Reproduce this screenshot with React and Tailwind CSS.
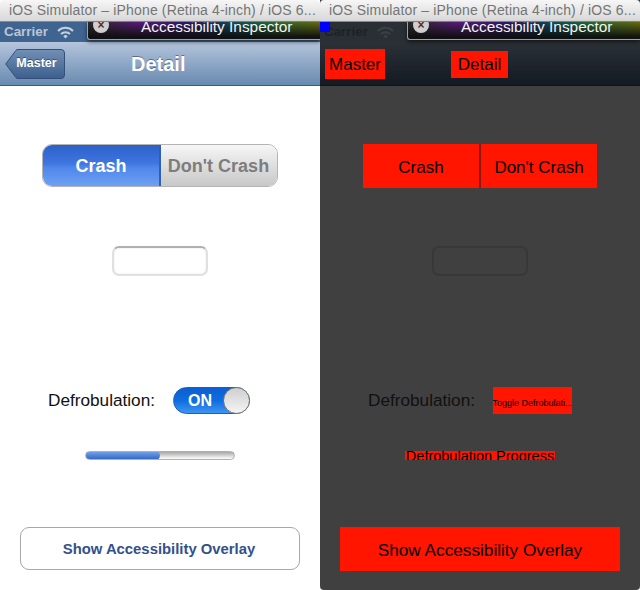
import React from 'react';

const sans = 'font-["Liberation_Sans",Arial,sans-serif]';

const TitleBar = () => (
  <div className="h-[22px] shrink-0 rounded-t-[4px] bg-gradient-to-b from-[#f6f6f6] to-[#d8d8d8] border-b border-[#8a8a8a] pl-[9px] text-[14px] leading-[21px] text-[#757575] tracking-[0.15px] whitespace-nowrap overflow-hidden">
    iOS Simulator – iPhone (Retina 4-inch) / iOS 6...
  </div>
);

const Wifi = ({ color }) => (
  <svg width="17" height="13" viewBox="0 0 17 13" fill="none" stroke={color} strokeWidth="2">
    <path d="M1 5 A10.5 10.5 0 0 1 16 5" />
    <path d="M4 8 A6.5 6.5 0 0 1 13 8" />
    <path d="M8.5 12.5 L6.3 10.3 A3 3 0 0 1 10.7 10.3 Z" fill={color} stroke="none" />
  </svg>
);

const BackShape = () => (
  <svg className="absolute inset-0" width="60" height="30" viewBox="0 0 60 30">
    <defs>
      <linearGradient id="back" x1="0" y1="0" x2="0" y2="1">
        <stop offset="0" stopColor="#7290b4" />
        <stop offset="1" stopColor="#3c5f8e" />
      </linearGradient>
    </defs>
    <path
      d="M0.7 15 L11 1.3 Q11.6 0.5 13 0.5 H56 Q59.5 0.5 59.5 4 V26 Q59.5 29.5 56 29.5 H13 Q11.6 29.5 11 28.7 Z"
      fill="url(#back)"
      stroke="#34507a"
    />
  </svg>
);

const Inspector = () => (
  <div className="absolute left-[87px] right-0 top-[22px] h-[18px] overflow-hidden rounded-bl-[3px] border-l border-b border-[#a0a0a0] bg-[linear-gradient(to_bottom,rgba(0,0,0,0)_0%,rgba(15,15,15,0.95)_85%),linear-gradient(to_right,#2a2a2a_0%,#5a1a78_22%,#2a1a60_45%,#104a5a_62%,#2a6a30_80%,#6a6a10_100%)] shadow-[0_2px_4px_rgba(0,0,0,0.55)]">
    <div className="absolute left-[5px] -top-[5px] flex h-[16px] w-[16px] items-center justify-center rounded-full bg-[#cfcfcf] text-[12px] font-bold leading-none text-[#5a2a2a]">×</div>
    <div className="absolute left-[53px] -top-[4px] whitespace-nowrap text-[15.4px] leading-[18px] text-[#f4f4f4]">Accessibility Inspector</div>
  </div>
);

const LeftPanel = () => (
  <div className={`relative flex h-[590px] w-[320px] shrink-0 flex-col overflow-hidden bg-white ${sans}`}>
    <TitleBar />
    <div className="flex h-5 shrink-0 items-center gap-[9px] bg-[#3f6490] pl-1 pt-[1px] text-[13.4px] font-bold text-[#b9c6d6]">
      <span>Carrier</span>
      <Wifi color="#c4d0de" />
    </div>
    <div className="flex h-[44px] shrink-0 items-center border-b border-[#3e5a80] bg-gradient-to-b from-[#b5c5dc] to-[#688ab0]">
      <div className="relative ml-[5px] flex h-[30px] w-[60px] items-center justify-center pl-[3px] text-[12.5px] font-bold text-white [text-shadow:0_-1px_0_rgba(0,0,0,0.4)]">
        <BackShape />
        <span className="relative">Master</span>
      </div>
      <span className="ml-[66px] text-[20px] font-bold text-white [text-shadow:0_-1px_0_rgba(0,0,0,0.4)]">Detail</span>
    </div>

    <div className="flex flex-1 flex-col items-center">
      <div className="mt-[58px] flex h-[43px] w-[236px] overflow-hidden rounded-[10px] border border-[#b4b4b4] text-[18px] font-bold">
        <div className="-my-px -ml-px flex w-[119px] items-center justify-center border-r-2 border-[#2f5fae] bg-[linear-gradient(to_bottom,#2a5fc8_0%,#4076e0_46%,#4f86ea_54%,#6fa2f4_100%)] pl-[1px] pt-[2px] text-white">Crash</div>
        <div className="flex flex-1 items-center justify-center bg-gradient-to-b from-[#f6f6f6] to-[#c8c8c8] pr-[1px] pt-[2px] text-[#7d7d7d]">Don't Crash</div>
      </div>

      <div className="mt-[59px] h-[30px] w-[96px] rounded-[7px] border-2 border-[#e0e0e0] border-t-[#b0b0b0] bg-white shadow-[inset_0_0_2px_rgba(0,0,0,0.12)]" />

      <div className="mt-[111px] ml-[48px] flex h-[27px] w-[202px] items-center justify-between self-start">
        <span className="text-[17.2px] text-[#111]">Defrobulation:</span>
        <div className="relative h-[27px] w-[77px] rounded-full border border-[#1a5fb8] bg-[linear-gradient(to_bottom,#0a5fd2_0%,#0f6ce0_50%,#3f95f2_100%)]">
          <span className="absolute left-[14px] top-[3px] text-[16px] font-bold leading-[20px] text-white">ON</span>
          <div className="absolute -right-px -top-px h-[27px] w-[27px] rounded-full border border-[#777] bg-gradient-to-b from-[#cfcfcf] to-[#f4f4f4]" />
        </div>
      </div>

      <div className="mt-[37px] flex h-[9px] w-[150px] overflow-hidden rounded-full border border-[#b0b0b0] bg-gradient-to-b from-[#a8a8a8] to-white">
        <div className="-my-px -ml-px h-[9px] w-[75px] rounded-full bg-gradient-to-b from-[#7ba6ea] to-[#2a63c4]" />
      </div>

      <div className="mt-[67px] flex h-[43px] w-[280px] items-center justify-center rounded-[9px] border border-[#a8a8a8] bg-white pr-[2px] pt-[1px] text-[14.85px] font-bold text-[#33508a]">
        Show Accessibility Overlay
      </div>
    </div>

    <Inspector />
  </div>
);

const redBox = 'flex items-center justify-center bg-[#ff1500] text-black';

const RightPanel = () => (
  <div className={`relative flex h-[590px] w-[320px] shrink-0 flex-col overflow-hidden rounded-b-[4px] bg-[#404040] ${sans}`}>
    <TitleBar />
    <div className="flex h-5 shrink-0 items-center gap-[9px] bg-[#2a2f36] pl-1 pt-[1px] text-[13.4px] font-bold text-[#1e2227]">
      <span>Carrier</span>
      <Wifi color="#3c4046" />
    </div>
    <div className="flex h-[44px] shrink-0 items-center border-b border-[#11151b] bg-gradient-to-b from-[#2c3138] to-[#141a22]">
      <div className={`${redBox} ml-[5px] h-[30px] w-[60px] pt-[2px] text-[17px]`}>Master</div>
      <div className={`${redBox} ml-[66px] mt-[2px] h-[27px] w-[57px] text-[17px]`}>Detail</div>
    </div>

    <div className="flex flex-1 flex-col items-center">
      <div className="mt-[58px] flex h-[44px] w-[234px] text-[17px]">
        <div className={`${redBox} w-[116px] pt-[3px]`}>Crash</div>
        <div className="w-[2px] bg-[#8a1a10]" />
        <div className={`${redBox} w-[116px] pt-[3px]`}>Don't Crash</div>
      </div>

      <div className="mt-[58px] h-[30px] w-[96px] rounded-[7px] border-2 border-[#383838] bg-[#404040]" />

      <div className="mt-[111px] ml-[48px] flex h-[27px] w-[204px] items-center justify-between self-start">
        <span className="text-[17.2px] text-[#111]">Defrobulation:</span>
        <div className={`${redBox} h-[27px] w-[79px] overflow-hidden whitespace-nowrap pt-[6px] text-[9px]`}>Toggle Defrobulati...</div>
      </div>

      <div className={`${redBox} mt-[37px] h-[9px] w-[150px] overflow-hidden whitespace-nowrap pt-[3px] text-[14.5px]`}>Defrobulation Progress</div>

      <div className={`${redBox} mt-[67px] h-[44px] w-[280px] pt-[3px] text-[17.2px]`}>Show Accessibility Overlay</div>
    </div>

    <div className="absolute left-0 top-[22px] h-[10px] w-[10px] bg-[#0000ff]" />
    <Inspector />
  </div>
);

export default function App() {
  return (
    <div className="flex h-[590px] w-[640px] overflow-hidden bg-white">
      <LeftPanel />
      <RightPanel />
    </div>
  );
}
